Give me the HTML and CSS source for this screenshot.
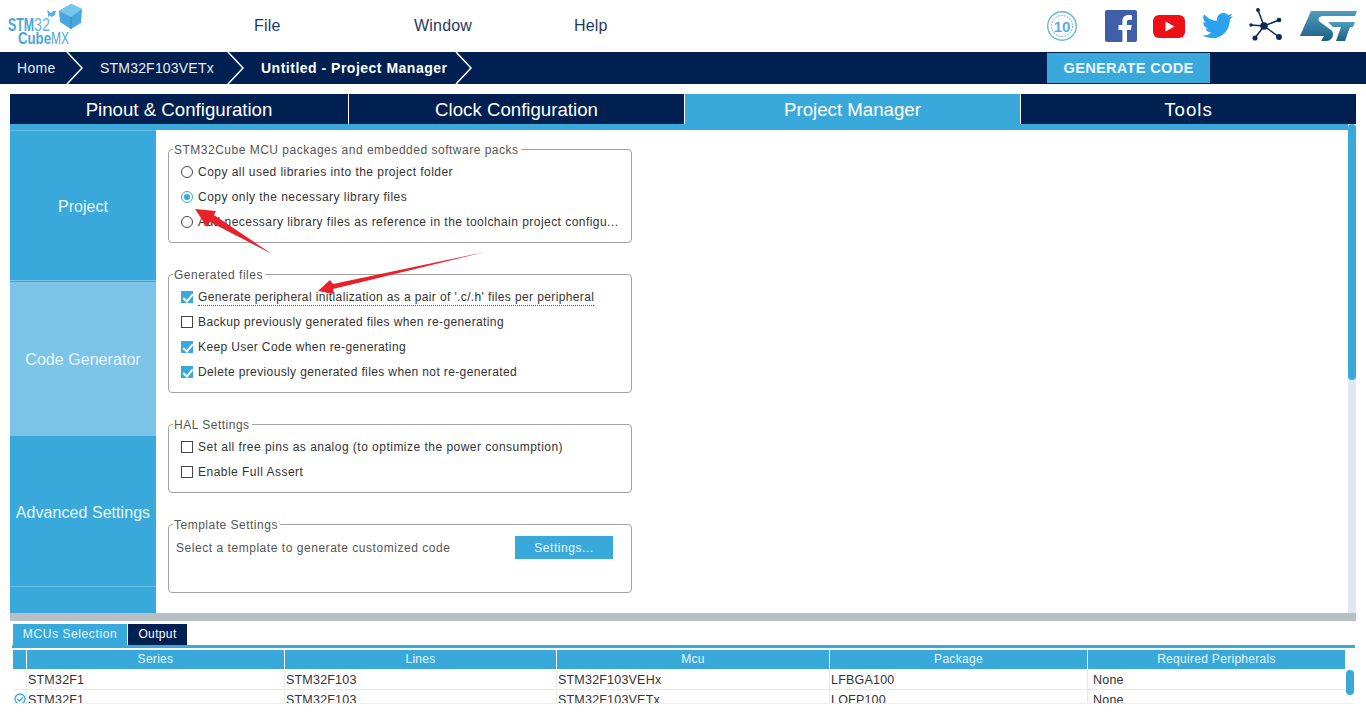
FILE: index.html
```html
<!DOCTYPE html>
<html lang="en">
<head>
<meta charset="utf-8">
<title>STM32CubeMX</title>
<link rel="stylesheet" href="styles.css">
</head>
<body>
<header class="topbar">
  <svg class="logo" width="90" height="52" viewBox="0 0 90 52">
    <text y="31" class="logo-a"><tspan x="8" textLength="26" lengthAdjust="spacingAndGlyphs">STM</tspan><tspan x="34" class="logo-b" textLength="16" lengthAdjust="spacingAndGlyphs">32</tspan></text>
    <text y="44" class="logo-d"><tspan x="18" textLength="33" lengthAdjust="spacingAndGlyphs">Cube</tspan><tspan x="51" class="logo-c" textLength="18" lengthAdjust="spacingAndGlyphs">MX</tspan></text>
    <path d="M47 10l4 3 2-2 3 0-1 4-3 2-2-1-2 1 0-3z" fill="#5cb1dd"/>
    <path d="M59 11l12-7 11 5-1 14-10 6-11-7z" fill="#47a7dc"/>
    <path d="M59 11l12 6 11-8-11-5z" fill="#7cc5ea"/>
    <path d="M71 17v12" stroke="#2f8fc4" stroke-width="1"/>
  </svg>
  <nav class="menu">
    <span class="menu-item">File</span>
    <span class="menu-item">Window</span>
    <span class="menu-item">Help</span>
  </nav>
  <div class="social">
    <svg class="s-badge" width="30" height="30" viewBox="1 1 30 30">
      <circle cx="16" cy="16" r="14.3" fill="#fff" stroke="#67b7e2" stroke-width="1.4"/>
      <circle cx="16" cy="16" r="10.5" fill="none" stroke="#67b7e2" stroke-width="1" stroke-dasharray="2 1"/>
      <text x="16" y="21.500" text-anchor="middle" class="badge-num">10</text>
    </svg>
    <svg class="s-fb" width="32" height="32" viewBox="0 0 32 32">
      <rect width="32" height="32" rx="2" fill="#3f5fa8"/>
      <path d="M22 32V20h4l.6-5H22v-3c0-1.4.5-2.3 2.4-2.3H27V5.3c-.5 0-2-.2-3.6-.2-3.6 0-6 2.2-6 6.2V15h-3.9v5h3.9v12z" fill="#fff"/>
    </svg>
    <svg class="s-yt" width="32" height="23" viewBox="0 0 32 23">
      <rect width="32" height="23" rx="6" fill="#ee0f17"/>
      <path d="M12.5 6.5l9 5-9 5z" fill="#fff"/>
    </svg>
    <svg class="s-tw" width="31" height="26" viewBox="0 0 24 20">
      <path transform="translate(0 -2.3)" d="M23.953 4.57a10 10 0 01-2.825.775 4.958 4.958 0 002.163-2.723c-.951.555-2.005.959-3.127 1.184a4.92 4.92 0 00-8.384 4.482C7.69 8.095 4.067 6.13 1.64 3.162a4.822 4.822 0 00-.666 2.475c0 1.71.87 3.213 2.188 4.096a4.904 4.904 0 01-2.228-.616v.06a4.923 4.923 0 003.946 4.827 4.996 4.996 0 01-2.212.085 4.936 4.936 0 004.604 3.417 9.867 9.867 0 01-6.102 2.105c-.39 0-.779-.023-1.17-.067a13.995 13.995 0 007.557 2.209c9.053 0 13.998-7.496 13.998-13.985 0-.21 0-.42-.015-.63A9.935 9.935 0 0024 4.59z" fill="#2aa2ee"/>
    </svg>
    <svg class="s-net" width="34" height="34" viewBox="0 0 34 34">
      <g stroke="#0c2a5a" stroke-width="1.5" fill="#0c2a5a">
        <path d="M15 18L9 2M15 18L30 12M15 18L30 29M15 18L6 30M15 18L2 17" fill="none"/>
        <circle cx="15" cy="18" r="3"/><circle cx="9" cy="2" r="1.2"/><circle cx="30" cy="12" r="1.6"/>
        <circle cx="30" cy="29" r="2.2"/><circle cx="6" cy="30" r="1.8"/><circle cx="2" cy="17" r="1"/>
      </g>
    </svg>
    <svg class="s-st" width="58" height="32" viewBox="0 0 58 32">
      <defs><linearGradient id="stg" x1="0" y1="0" x2="0" y2="1"><stop offset="0" stop-color="#4f9cbf"/><stop offset="1" stop-color="#1c5f83"/></linearGradient></defs>
      <path d="M11 1H57L55 6H23C19 6 17 10 20 12L31 20C35 23 33 31 26 31H21L24 26H0Z" fill="url(#stg)"/>
      <path d="M28 12H55L53 17H50L45 31H36L41 17H33Z" fill="url(#stg)"/>
    </svg>
  </div>
</header>

<div class="crumbs">
  <span class="crumb c-home">Home</span>
  <svg class="chev" width="18" height="32" viewBox="0 0 18 32"><path d="M1 0L16 16L1 32" fill="none" stroke="#fff" stroke-width="1.5"/></svg>
  <span class="crumb c-mcu">STM32F103VETx</span>
  <svg class="chev" width="18" height="32" viewBox="0 0 18 32"><path d="M1 0L16 16L1 32" fill="none" stroke="#fff" stroke-width="1.5"/></svg>
  <span class="crumb c-cur">Untitled - Project Manager</span>
  <svg class="chev" width="18" height="32" viewBox="0 0 18 32"><path d="M1 0L16 16L1 32" fill="none" stroke="#fff" stroke-width="1.5"/></svg>
  <button class="generate">GENERATE CODE</button>
</div>

<div class="tabs">
  <div class="tab">Pinout &amp; Configuration</div>
  <div class="tab">Clock Configuration</div>
  <div class="tab tab-on">Project Manager</div>
  <div class="tab tab-tools">Tools</div>
</div>

<main class="workspace">
  <aside class="side">
    <div class="side-item si-project">Project</div>
    <div class="side-item si-code">Code Generator</div>
    <div class="side-item si-adv">Advanced Settings</div>
    <div class="side-rest"></div>
  </aside>
  <section class="panel">
    <fieldset class="group g1">
      <legend>STM32Cube MCU packages and embedded software packs</legend>
      <div class="row"><span class="radio"></span><span>Copy all used libraries into the project folder</span></div>
      <div class="row"><span class="radio on"></span><span>Copy only the necessary library files</span></div>
      <div class="row"><span class="radio"></span><span>Add necessary library files as reference in the toolchain project configu...</span></div>
    </fieldset>
    <fieldset class="group g2">
      <legend>Generated files</legend>
      <div class="row"><span class="check on"></span><span class="dotted">Generate peripheral initialization as a pair of '.c/.h' files per peripheral</span></div>
      <div class="row"><span class="check"></span><span>Backup previously generated files when re-generating</span></div>
      <div class="row"><span class="check on"></span><span>Keep User Code when re-generating</span></div>
      <div class="row"><span class="check on"></span><span>Delete previously generated files when not re-generated</span></div>
    </fieldset>
    <fieldset class="group g3">
      <legend>HAL Settings</legend>
      <div class="row"><span class="check"></span><span>Set all free pins as analog (to optimize the power consumption)</span></div>
      <div class="row"><span class="check"></span><span>Enable Full Assert</span></div>
    </fieldset>
    <fieldset class="group g4">
      <legend>Template Settings</legend>
      <div class="tpl-row"><span class="tpl-text">Select a template to generate customized code</span><button class="settings">Settings...</button></div>
    </fieldset>
    <div class="vscroll"><div class="vthumb"></div></div>
  </section>
  <svg class="arrows" width="520" height="100" viewBox="180 200 520 100">
    <path d="M272 254L214 215L216 211L195 209L207 227L210 222Z" fill="#e8222c"/>
    <path d="M485 252L333 284L330 280L318 291L334 294L333 289Z" fill="#e8222c"/>
  </svg>
</main>

<div class="splitter"></div>

<section class="bottom">
  <div class="btabs">
    <span class="btab b-mcu">MCUs Selection</span>
    <span class="btab b-out">Output</span>
  </div>
  <div class="bline"></div>
  <div class="grid-wrap">
    <div class="grid">
      <div class="hd"></div><div class="hd">Series</div><div class="hd">Lines</div><div class="hd">Mcu</div><div class="hd">Package</div><div class="hd">Required Peripherals</div>
      <div class="cell"></div><div class="cell">STM32F1</div><div class="cell">STM32F103</div><div class="cell">STM32F103VEHx</div><div class="cell">LFBGA100</div><div class="cell c-last">None</div>
      <div class="cell c-flag"><svg width="12" height="12" viewBox="0 0 12 12"><circle cx="6" cy="6" r="5" fill="none" stroke="#39a9dc" stroke-width="1.3"/><path d="M3.500 6l2 2 3.500-3.500" fill="none" stroke="#39a9dc" stroke-width="1.300"/></svg></div><div class="cell">STM32F1</div><div class="cell">STM32F103</div><div class="cell">STM32F103VETx</div><div class="cell">LQFP100</div><div class="cell c-last">None</div>
    </div>
    <div class="gscroll"><div class="gthumb"></div></div>
  </div>
</section>
</body>
</html>
```
FILE: styles.css
```css
* { box-sizing: border-box; }
html, body { margin: 0; height: 715px; overflow: hidden; background: #fff; }
body { font-family: "Liberation Sans", Arial, sans-serif; color: #333; }

.topbar { display: flex; align-items: center; height: 52px; position: relative; }
.logo { flex: none; display: block; }
.logo-a { font: bold 18px "Liberation Sans", sans-serif; fill: #4ba6d6; }
.logo-b { font-weight: normal; fill: #6ab6df; }
.logo-d { font: bold 16px "Liberation Sans", sans-serif; fill: #4ba6d6; }
.logo-c { font-weight: normal; }
.menu { display: flex; margin-left: 164px; font-size: 16px; letter-spacing: .2px; color: #1f3a63; }
.menu-item { width: 160px; }
.social { margin-left: auto; display: flex; align-items: center; padding-right: 8px; }
.s-badge { margin-right: 28px; }
.s-fb { margin-right: 16px; }
.s-yt { margin-right: 17px; }
.s-tw { margin-right: 16px; }
.s-net { margin-right: 17px; margin-top: -2px; }
.badge-num { font: bold 15px "Liberation Sans", sans-serif; fill: #58aede; }

.crumbs { display: flex; align-items: center; height: 32px; background: #002052; color: #fff; font-size: 14px; }
.chev { flex: none; }
.crumb { white-space: nowrap; }
.c-home { margin-left: 17px; width: 49px; letter-spacing: .3px; color: #e8edf3; }
.c-mcu { margin-left: 16px; width: 127px; letter-spacing: .2px; color: #e8edf3; }
.c-cur { margin-left: 16px; width: 194px; font-weight: bold; letter-spacing: .5px; }
.generate { margin-left: 574px; width: 163px; height: 30px; border: 0; padding: 0; background: #39a9dc; color: #e8f6fc; font: bold 14.67px "Liberation Sans", sans-serif; letter-spacing: .25px; }

.tabs { display: grid; grid-template-columns: 338px 336px 336px 1fr; margin: 10px 10px 0; height: 30px; background: #002052; }
.tab { display: flex; align-items: center; justify-content: center; padding-top: 1px; color: #fff; font-size: 18.67px; border-left: 1px solid #fff; }
.tab:first-child { border-left: 0; }
.tab-on { background: #39a9dc; }
.tab-tools { letter-spacing: 1px; }

.workspace { display: flex; margin: 0 10px; height: 489px; border-top: 6px solid #39a9dc; position: relative; }
.side { width: 146px; flex: none; display: flex; flex-direction: column; background: #39a9dc; color: #e6f6fd; font-size: 16px; letter-spacing: .05px; }
.side-item { display: flex; align-items: center; justify-content: center; white-space: nowrap; padding-top: 2px; }
.si-project { height: 151px; border-top: 1px solid #63bde6; border-bottom: 1px solid #7cc6e8; margin-bottom: 1px; }
.si-code { height: 154px; background: #7cc5e9; }
.si-adv { height: 151px; padding-top: 3px; border-bottom: 1px solid #63bde6; }
.side-rest { flex: 1; }
.panel { flex: 1; display: flex; flex-direction: column; padding: 12px 0 0 12px; position: relative; font-size: 12px; letter-spacing: .43px; }
.group { flex: none; width: 464px; margin: 0 0 24px; padding: 3px 0 0 12px; border: 1px solid #a3a3a3; border-radius: 4px; min-inline-size: 0; }
.group legend { margin-left: -8px; padding: 2px 2px 0 1px; line-height: 12px; color: #555; letter-spacing: .5px; }
.g1 { height: 101px; letter-spacing: .46px; }
.g2 { height: 126px; letter-spacing: .38px; }
.g3 { height: 76px; letter-spacing: .48px; }
.g4 { height: 76px; padding-left: 7px; }
.g4 legend { margin-left: -3px; }
.row { display: flex; align-items: center; height: 25px; white-space: nowrap; }
.radio, .check { flex: none; width: 12px; height: 12px; margin-right: 5px; border: 1px solid #444; background: #fff; position: relative; }
.radio { border-radius: 50%; }
.radio.on { border-color: #39a9dc; }
.radio.on::after { content: ""; position: absolute; inset: 2px; border-radius: 50%; background: #39a9dc; }
.check.on { background: #39a9dc; border-color: #39a9dc; }
.check.on::after { content: ""; position: absolute; left: 3px; top: 0; width: 4px; height: 8px; border: solid #fff; border-width: 0 2px 2px 0; transform: rotate(40deg); }
.dotted { border-bottom: 1px dotted #555; line-height: 15px; margin-top: 3px; }
.tpl-row { display: flex; align-items: center; margin-top: 2px; }
.tpl-text { width: 339px; color: #555; letter-spacing: .54px; }
.settings { width: 98px; height: 23px; border: 0; padding: 0; background: #39a9dc; color: #e6f6fd; font: 12px "Liberation Sans", sans-serif; letter-spacing: .55px; }
.vscroll { position: absolute; right: 0; top: -6px; bottom: 0; width: 8px; background: #dfe7f2; }
.vthumb { height: 256px; background: #39a9dc; border-radius: 4px; }
.arrows { position: absolute; left: 170px; top: 70px; pointer-events: none; }

.splitter { height: 8px; margin: 0 10px; background: #b7bec4; }
.bottom { margin: 3px 10px 0; }
.btabs { display: flex; height: 21px; padding-left: 3px; font-size: 12px; letter-spacing: .6px; color: #e6f6fd; }
.btab { display: flex; align-items: center; justify-content: center; padding-bottom: 1px; }
.b-mcu { width: 114px; background: #39a9dc; margin-right: 1px; }
.b-out { width: 59px; background: #002052; color: #fff; letter-spacing: .35px; }
.bline { height: 3px; margin: 0 1px 0 2px; background: #39a9dc; }
.grid-wrap { display: flex; height: 54px; margin: 2px 2px 0 3px; border-bottom: 1px solid #eceff1; overflow: hidden; }
.grid { width: 1332px; flex: none; display: grid; grid-template-columns: 14px 258px 272px 273px 258px 257px; grid-auto-rows: 20px; align-content: start; font-size: 12.5px; letter-spacing: .2px; }
.hd { height: 19px; background: #39a9dc; color: #e6f6fd; text-align: center; line-height: 19px; border-right: 1px solid #fff; font-size: 12px; letter-spacing: .3px; }
.hd:nth-child(6) { border-right: 0; }
.cell { padding-left: 1px; line-height: 20px; border-right: 1px solid #e6e9ec; border-bottom: 1px solid #e6e9ec; white-space: nowrap; }
.c-last { padding-left: 5px; border-right: 0; }
.c-flag { padding: 3px 0 0 1px; line-height: 0; }
.gscroll { flex: 1; padding: 20px 0 0 1px; }
.gthumb { width: 8px; height: 25px; background: #39a9dc; border-radius: 4px; }
```
